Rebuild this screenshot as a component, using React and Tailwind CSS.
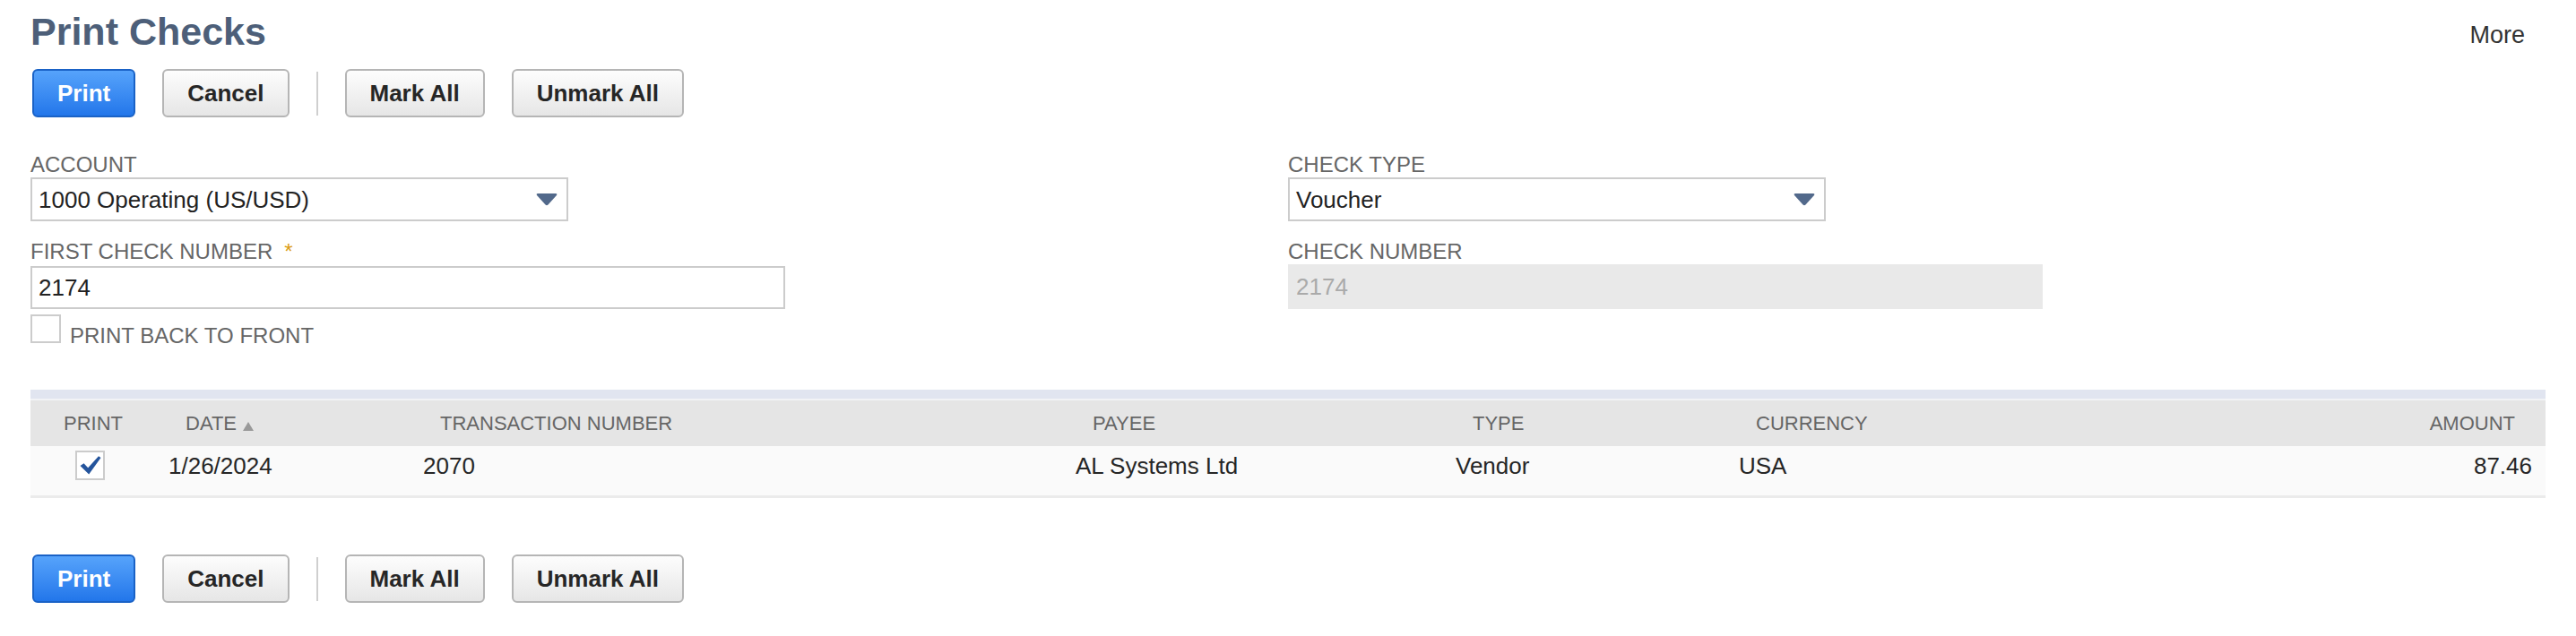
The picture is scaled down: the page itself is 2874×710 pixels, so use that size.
import React from "react";

const FONT = "font-['Liberation_Sans',Arial,sans-serif]";

function Btn({ children, primary }) {
  if (primary) {
    return (
      <button className="h-[54px] px-[26px] rounded-[6px] border-2 border-[#1a62c6] bg-gradient-to-b from-[#56a3fb] to-[#2276ea] text-white text-[26px] leading-[30px] font-bold">
        {children}
      </button>
    );
  }
  return (
    <button className="h-[54px] px-[26px] rounded-[6px] border-2 border-[#b5b5b5] bg-gradient-to-b from-[#fdfdfd] to-[#e6e6e6] text-[#262626] text-[26px] leading-[30px] font-bold">
      {children}
    </button>
  );
}

function ButtonRow({ className }) {
  return (
    <div className={`flex items-center gap-[30px] ml-[2px] ${className}`}>
      <Btn primary>Print</Btn>
      <Btn>Cancel</Btn>
      <div className="w-[2px] h-[49px] bg-[#cfcfcf]" />
      <Btn>Mark All</Btn>
      <Btn>Unmark All</Btn>
    </div>
  );
}

function Arrow() {
  return (
    <svg width="24" height="14" viewBox="0 0 24 14" className="mr-[10px]">
      <path
        d="M2 0 H22 Q24 0.2 23 2 L13.5 12.6 Q12 14 10.5 12.6 L1 2 Q0 0.2 2 0 Z"
        fill="#52698b"
      />
    </svg>
  );
}

function Label({ children, className = "" }) {
  return (
    <div className={`h-[28px] text-[24px] leading-[28px] text-[#666] ${className}`}>
      {children}
    </div>
  );
}

function Select({ value }) {
  return (
    <div className="w-[600px] h-[49px] border-2 border-[#cccccc] bg-white flex items-center justify-between pl-[7px]">
      <span className="text-[26px] leading-[30px] text-[#222]">{value}</span>
      <Arrow />
    </div>
  );
}

function Check() {
  return (
    <svg width="24" height="21" viewBox="0 0 24 21">
      <path
        d="M0.5 11 L4.5 8.2 L9.2 13.2 L21 0.3 L23.5 2 L10.2 20.5 Z"
        fill="#24549c"
      />
    </svg>
  );
}

export default function App() {
  const cols = "grid grid-cols-[140px_284px_728px_424px_316px_1fr_400px]";
  return (
    <div className={`w-[2874px] h-[710px] bg-white px-[34px] pt-[11px] ${FONT}`}>
      <div className="flex items-start justify-between">
        <h1 className="text-[43px] leading-[48px] font-bold text-[#4d5f79]">Print Checks</h1>
        <div className="mt-[12px] mr-[23px] text-[27px] leading-[32px] text-[#333]">More</div>
      </div>

      <ButtonRow className="mt-[18px]" />

      <div className="grid grid-cols-2 mt-[39px]">
        <div className="flex flex-col">
          <Label>ACCOUNT</Label>
          <Select value="1000 Operating (US/USD)" />
          <Label className="mt-[20px] flex items-start">
            FIRST CHECK NUMBER
            <span className="ml-[13px] text-[#dc9e16]">*</span>
          </Label>
          <div className="mt-[2px] w-[842px] h-[48px] border-2 border-[#cccccc] bg-white flex items-center pl-[7px]">
            <span className="text-[26px] leading-[30px] text-[#222]">2174</span>
          </div>
          <div className="mt-[6px] flex items-start">
            <div className="w-[34px] h-[32px] border-2 border-[#cccccc] bg-white" />
            <div className="mt-[10px] ml-[10px] text-[24px] leading-[28px] text-[#666]">
              PRINT BACK TO FRONT
            </div>
          </div>
        </div>
        <div className="flex flex-col">
          <Label>CHECK TYPE</Label>
          <Select value="Voucher" />
          <Label className="mt-[20px]">CHECK NUMBER</Label>
          <div className="mt-[0px] w-[842px] h-[50px] bg-[#e9e9e9] flex items-center pl-[9px]">
            <span className="text-[26px] leading-[30px] text-[#aaaaaa]">2174</span>
          </div>
        </div>
      </div>

      <div className="mt-[46px]">
        <div className="h-[10px] bg-[#e1e5f0]" />
        <div className="h-[2px] bg-[#f2f3f6]" />
        <div className={`${cols} h-[51px] bg-[#e5e5e5] items-center text-[22px] leading-[26px] text-[#666]`}>
          <div className="text-center">PRINT</div>
          <div className="pl-[33px] flex items-end">
            DATE
            <svg width="12" height="10" viewBox="0 0 12 10" className="ml-[7px] mb-[5px]">
              <path d="M6 0 L12 10 H0 Z" fill="#999" />
            </svg>
          </div>
          <div className="pl-[33px]">TRANSACTION NUMBER</div>
          <div className="pl-[33px]">PAYEE</div>
          <div className="pl-[33px]">TYPE</div>
          <div className="pl-[33px]">CURRENCY</div>
          <div className="pr-[34px] text-right">AMOUNT</div>
        </div>
        <div className={`${cols} bg-[#fafafa] items-center pt-[5px] pb-[17px] text-[26px] leading-[30px] text-[#262626]`}>
          <div className="flex justify-center pr-[7px]">
            <div className="w-[33px] h-[33px] border-2 border-[#cccccc] bg-white flex items-center justify-center">
              <Check />
            </div>
          </div>
          <div className="pl-[14px]">1/26/2024</div>
          <div className="pl-[14px]">2070</div>
          <div className="pl-[14px]">AL Systems Ltd</div>
          <div className="pl-[14px]">Vendor</div>
          <div className="pl-[14px]">USA</div>
          <div className="pr-[15px] text-right">87.46</div>
        </div>
        <div className="h-[3px] bg-[#ebebeb]" />
      </div>

      <ButtonRow className="mt-[63px]" />
    </div>
  );
}
